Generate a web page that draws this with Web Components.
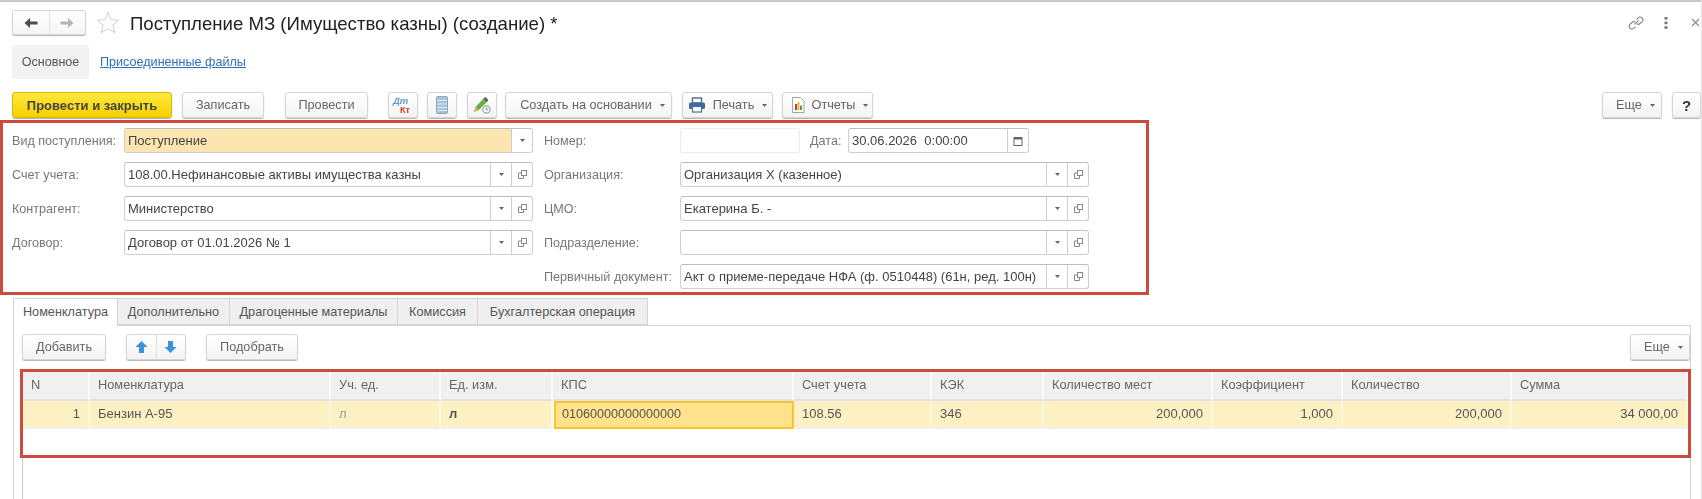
<!DOCTYPE html>
<html lang="ru">
<head>
<meta charset="utf-8">
<title>Поступление МЗ</title>
<style>
    html, body{
        margin: 0;
        height: 100%;
        overflow: hidden;
        background: #fff;
        font: 13px "Liberation Sans", Arial, sans-serif;
        color: #444;
    }
</style>
</head>
<body>
<one-page>
    <one-strip></one-strip>

    <one-header title-text="Поступление МЗ (Имущество казны) (создание) *"></one-header>

    <one-sections>
        <span slot="active">Основное</span>
        <span>Присоединенные файлы</span>
    </one-sections>

    <one-toolbar>
        <one-button primary style="width:160px">Провести и закрыть</one-button>
        <one-button style="width:82px;margin-left:10px">Записать</one-button>
        <one-button style="width:83px;margin-left:21px">Провести</one-button>
        <one-button style="width:30px;margin-left:20px"><one-icon name="dtkt"></one-icon></one-button>
        <one-button style="width:30px;margin-left:9px"><one-icon name="list"></one-icon></one-button>
        <one-button style="width:30px;margin-left:10px"><one-icon name="pencil"></one-icon></one-button>
        <one-button menu style="width:167px;margin-left:8px;padding-left:8px">Создать на основании</one-button>
        <one-button menu style="width:91px;margin-left:10px"><one-icon name="print" slot="icon"></one-icon>Печать</one-button>
        <one-button menu style="width:91px;margin-left:9px;padding-left:4px"><one-icon name="report" slot="icon"></one-icon>Отчеты</one-button>
        <one-button menu style="width:60px;margin-left:auto;padding-left:7px">Еще</one-button>
        <one-button style="width:29px;margin-left:10px;font-weight:700;color:#333;font-size:15px">?</one-button>
    </one-toolbar>

    <one-form>
        <one-column style="--label-width:112px;width:521px">
            <one-row label="Вид поступления:"><one-field value="Поступление" drop highlight></one-field></one-row>
            <one-row label="Счет учета:"><one-field value="108.00.Нефинансовые активы имущества казны" drop open></one-field></one-row>
            <one-row label="Контрагент:"><one-field value="Министерство" drop open></one-field></one-row>
            <one-row label="Договор:"><one-field value="Договор от 01.01.2026 № 1" drop open></one-field></one-row>
        </one-column>
        <one-column style="--label-width:136px;width:545px;margin-left:11px">
            <one-row label="Номер:">
                <one-field light style="flex:0 0 120px"></one-field>
                <one-label style="margin-left:10px;width:38px">Дата:</one-label>
                <one-field value="30.06.2026  0:00:00" calendar style="flex:0 0 181px"></one-field>
            </one-row>
            <one-row label="Организация:"><one-field value="Организация Х (казенное)" drop open></one-field></one-row>
            <one-row label="ЦМО:"><one-field value="Екатерина Б. -" drop open></one-field></one-row>
            <one-row label="Подразделение:"><one-field drop open></one-field></one-row>
            <one-row label="Первичный документ:"><one-field value="Акт о приеме-передаче НФА (ф. 0510448) (61н, ред. 100н)" drop open></one-field></one-row>
        </one-column>
    </one-form>

    <one-tabs>
        <one-tab active style="width:105px">Номенклатура</one-tab>
        <one-tab style="width:112px">Дополнительно</one-tab>
        <one-tab style="width:168px">Драгоценные материалы</one-tab>
        <one-tab style="width:80px">Комиссия</one-tab>
        <one-tab style="width:170px">Бухгалтерская операция</one-tab>
    </one-tabs>

    <one-panel>
        <one-toolbar style="margin:0">
            <one-button style="width:84px">Добавить</one-button>
            <one-updown style="margin-left:20px"></one-updown>
            <one-button style="width:92px;margin-left:20px">Подобрать</one-button>
            <one-button menu style="width:60px;margin-left:auto;padding-left:7px">Еще</one-button>
        </one-toolbar>
        <one-grid>
            <one-cell head>N</one-cell>
            <one-cell head>Номенклатура</one-cell>
            <one-cell head>Уч. ед.</one-cell>
            <one-cell head>Ед. изм.</one-cell>
            <one-cell head>КПС</one-cell>
            <one-cell head>Счет учета</one-cell>
            <one-cell head>КЭК</one-cell>
            <one-cell head>Количество мест</one-cell>
            <one-cell head>Коэффициент</one-cell>
            <one-cell head>Количество</one-cell>
            <one-cell head>Сумма</one-cell>

            <one-cell right>1</one-cell>
            <one-cell>Бензин А-95</one-cell>
            <one-cell dim>л</one-cell>
            <one-cell strong>л</one-cell>
            <one-cell current>01060000000000000</one-cell>
            <one-cell>108.56</one-cell>
            <one-cell>346</one-cell>
            <one-cell right>200,000</one-cell>
            <one-cell right>1,000</one-cell>
            <one-cell right>200,000</one-cell>
            <one-cell right>34 000,00</one-cell>
        </one-grid>
    </one-panel>

    <one-mark style="left:0;top:120px;width:1149px;height:175px"></one-mark>
    <one-mark style="left:20px;top:369px;width:1671px;height:89px"></one-mark>
</one-page>

<script>
"use strict"

const ICONS = {
    back: `<svg width="16" height="12" viewBox="0 0 16 12"><path d="M7 1 1.5 6 7 11V7.6h7.5V4.4H7z" fill="#4d4d4d"/></svg>`,
    forward: `<svg width="16" height="12" viewBox="0 0 16 12"><path d="M9 1l5.5 5L9 11V7.6H1.5V4.4H9z" fill="#b5b5b5"/></svg>`,
    star: `<svg width="24" height="23" viewBox="0 0 24 23"><path d="M12 1.5l3.1 7 7.4.7-5.6 5 1.7 7.4L12 17.8l-6.6 3.8 1.7-7.4-5.6-5 7.4-.7z" fill="#fff" stroke="#d6d6d6" stroke-width="1.1"/></svg>`,
    dtkt: `<svg width="22" height="20" viewBox="0 0 22 20"><text x="1" y="9" font-family="Liberation Sans" font-size="9.5" font-weight="700" font-style="italic" fill="#6a9ad0">Дт</text><text x="8" y="18" font-family="Liberation Sans" font-size="9" font-weight="700" fill="#d8352c">Кт</text></svg>`,
    list: `<svg width="12" height="18" viewBox="0 0 12 18"><rect x=".5" y=".5" width="11" height="17" rx="1" fill="#a9c2d8" stroke="#8aa8c0"/><path d="M1 4.5h10M1 8h10M1 11.5h10M1 14.5h10" stroke="#e3edf5"/></svg>`,
    pencil: `<svg width="20" height="20" viewBox="0 0 20 20"><path d="M2 17l1.5-5L11 4l3.4 3.4-7.6 7.6z" fill="#6bb043"/><path d="M11 4l1.6-1.6a1 1 0 0 1 1.4 0l2 2a1 1 0 0 1 0 1.4L14.4 7.4z" fill="#5a6a50"/><path d="M2 17l1.5-5 3.3 3z" fill="#d9b27a"/><circle cx="14.5" cy="14.5" r="3.6" fill="#fff" stroke="#9aa6b0" stroke-width="1.2"/><path d="M14.5 12.6v2.2h1.8" fill="none" stroke="#7a8792"/></svg>`,
    print: `<svg width="18" height="16" viewBox="0 0 18 16"><rect x="4.5" y="1" width="9" height="5" fill="#fff" stroke="#4a7199" stroke-width="1.4"/><rect x="1" y="5.5" width="16" height="6.5" rx="1.5" fill="#3f6c9a"/><rect x="4.5" y="9.5" width="9" height="5.5" fill="#fff" stroke="#4a7199" stroke-width="1.2"/></svg>`,
    report: `<svg width="14" height="16" viewBox="0 0 14 16"><path d="M1.5.5h8l3.5 3.5v11.5H1.5z" fill="#fff" stroke="#a5a5a5"/><rect x="4" y="7" width="2" height="6" fill="#d23a2e"/><rect x="6.5" y="5" width="2" height="8" fill="#e8b93a"/><rect x="9" y="8.5" width="2" height="4.5" fill="#4ea04a"/></svg>`,
    link: `<svg width="16" height="16" viewBox="0 0 16 16"><g fill="none" stroke="#8a8a8a" stroke-width="1.2"><path d="M6.6 9.4l4-4"/><path d="M8.6 4.4l1.5-1.6a2.7 2.7 0 0 1 3.9 3.8l-1.9 1.9a2.7 2.7 0 0 1-3.4.3"/><path d="M7.4 11.6l-1.5 1.6a2.7 2.7 0 0 1-3.9-3.8l1.9-1.9a2.7 2.7 0 0 1 3.4-.3"/></g></svg>`,
    dots: `<svg width="4" height="12" viewBox="0 0 4 12"><g fill="#777"><rect x=".5" width="3" height="2.6"/><rect x=".5" y="4.6" width="3" height="2.6"/><rect x=".5" y="9.2" width="3" height="2.6"/></g></svg>`,
    close: `<svg width="9" height="9" viewBox="0 0 9 9"><path d="M1 1l7 7M8 1L1 8" stroke="#888" stroke-width="1.1"/></svg>`,
    arrow: `<svg width="5" height="3" viewBox="0 0 5 3"><path d="M0 0h5L2.5 3z" fill="#666"/></svg>`,
    open: `<svg width="9" height="9" viewBox="0 0 9 9"><g fill="#fff" stroke="#888"><rect x="3.5" y=".5" width="5" height="5"/><path d="M3.5 3h-3v5.500h5v-3" fill="none"/></g></svg>`,
    calendar: `<svg width="10" height="10" viewBox="0 0 10 10"><rect x="1" y="1.500" width="8" height="8" fill="#fff" stroke="#666"/><rect x="1" y="1" width="8" height="2.500" fill="#666"/></svg>`,
    up: `<svg width="13" height="14" viewBox="0 0 13 14"><path d="M6.500 1L12.500 7H9v6H4V7H.5z" fill="#3a92dc"/></svg>`,
    down: `<svg width="13" height="14" viewBox="0 0 13 14"><path d="M6.500 13L12.500 7H9V1H4v6H.5z" fill="#3a92dc"/></svg>`
};

class Base extends HTMLElement{
    constructor(){
        super();

        this.attachShadow({mode: "open"});
    }

    connectedCallback(){
        this.shadowRoot.innerHTML = `${this.render()} <style>${this.styles()}</style>`;
    }

    render(){
        return `<slot></slot>`;
    }

    styles(){
        return `:host{display:block}`;
    }
}

class Page extends Base{
    styles(){
        return `
        :host{
            display: flex;
            flex-direction: column;
            box-sizing: border-box;
            height: 499px;
            position: relative;
            overflow: hidden;
            border-right: 1px solid #e6e6e6;
            filter: blur(.35px);
        }`;
    }
}

class Strip extends Base{
    styles(){
        return `
        :host{
            height: 2px;
            background: #c9c9c9;
        }`;
    }
}

class Header extends Base{
    render(){
        return `
        <div class="nav"><span>${ICONS.back}</span><i></i><span>${ICONS.forward}</span></div>
        <div class="star">${ICONS.star}</div>
        <h1>${this.getAttribute('title-text')}</h1>
        <div class="tools">${ICONS.link}<span class="dots">${ICONS.dots}</span>${ICONS.close}</div>
        `;
    }

    styles(){
        return `
        :host{
            display: flex;
            align-items: center;
            height: 25px;
            margin: 8px 0 0 12px;
        }
        .nav{
            display: flex;
            align-items: center;
            width: 74px;
            height: 25px;
            box-sizing: border-box;
            border: 1px solid #d6d6d6;
            border-radius: 3px;
            background: linear-gradient(#fff, #f5f5f5);
            box-shadow: 0 1px 1px rgba(0, 0, 0, .3);
        }
        .nav span{ flex: 1; display: flex; justify-content: center; }
        .nav i{ width: 1px; height: 100%; background: #e2e2e2; }
        .star{ margin-left: 10px; height: 23px; }
        h1{
            margin: 2px 0 0 10px;
            font-weight: 400;
            font-size: 18.6px;
            color: #222;
            white-space: nowrap;
        }
        .tools{
            margin-left: auto;
            display: flex;
            align-items: center;
            gap: 20px;
            padding-right: 1px;
        }
        .dots{ display: flex; margin-right: 3px; }`;
    }
}

class Sections extends Base{
    render(){
        return `<div class="active"><slot name="active"></slot></div><div class="link"><slot></slot></div>`;
    }

    styles(){
        return `
        :host{
            display: flex;
            align-items: center;
            height: 34px;
            margin: 10px 0 0 12px;
            font-size: 12.6px;
        }
        .active{
            width: 77px;
            height: 34px;
            line-height: 34px;
            text-align: center;
            background: #f2f2f2;
            border-radius: 3px;
            color: #555;
        }
        .link{
            margin-left: 11px;
            color: #2f6fb8;
            text-decoration: underline;
        }`;
    }
}

class Toolbar extends Base{
    styles(){
        return `
        :host{
            display: flex;
            height: 26px;
            margin: 13px 0 0 12px;
        }`;
    }
}

class Button extends Base{
    render(){
        const arrow = this.hasAttribute('menu') ? `<span class="arrow">${ICONS.arrow}</span>` : '';
        return `<slot name="icon"></slot><span class="text"><slot></slot></span>${arrow}`;
    }

    styles(){
        return `
        :host{
            display: flex;
            align-items: center;
            justify-content: center;
            box-sizing: border-box;
            height: 26px;
            flex: none;
            border: 1px solid #d6d6d6;
            border-radius: 3px;
            background: linear-gradient(#fff, #f3f3f3);
            box-shadow: 0 1px 1px rgba(0, 0, 0, .3);
            color: #666;
            font-size: 12.7px;
            white-space: nowrap;
        }
        :host([primary]){
            background: linear-gradient(#fce93f, #f6d000);
            border-color: #d9b900;
            color: #444;
            font-weight: 700;
            font-size: 13px;
        }
        .text{ display: flex; align-items: center; }
        ::slotted([slot=icon]){ margin-right: 7px; }
        .arrow{ display: flex; margin-left: 8px; }`;
    }
}

class Icon extends Base{
    render(){
        return ICONS[this.getAttribute('name')];
    }

    styles(){
        return `
        :host{ display: flex; align-items: center; justify-content: center; }`;
    }
}

class UpDown extends Base{
    render(){
        return `<span>${ICONS.up}</span><i></i><span>${ICONS.down}</span>`;
    }

    styles(){
        return `
        :host{
            display: flex;
            align-items: center;
            box-sizing: border-box;
            width: 60px;
            height: 26px;
            border: 1px solid #d6d6d6;
            border-radius: 3px;
            background: linear-gradient(#fff, #f3f3f3);
            box-shadow: 0 1px 1px rgba(0, 0, 0, .3);
        }
        span{ flex: 1; display: flex; justify-content: center; }
        i{ width: 1px; height: 100%; background: #e0e0e0; }`;
    }
}

class Form extends Base{
    styles(){
        return `
        :host{
            display: flex;
            height: 161px;
            margin: 10px 0 0 12px;
        }`;
    }
}

class Column extends Base{
    styles(){
        return `
        :host{
            display: flex;
            flex-direction: column;
            gap: 9px;
            flex: none;
        }`;
    }
}

class Row extends Base{
    render(){
        return `<span>${this.getAttribute('label')}</span><slot></slot>`;
    }

    styles(){
        return `
        :host{
            display: flex;
            align-items: center;
            height: 25px;
        }
        span{
            flex: none;
            width: var(--label-width);
            color: #777;
            font-size: 12.6px;
            white-space: nowrap;
        }`;
    }
}

class Label extends Base{
    styles(){
        return `
        :host{
            display: block;
            flex: none;
            color: #777;
            font-size: 12.6px;
            white-space: nowrap;
        }`;
    }
}

class Field extends Base{
    render(){
        const value = this.getAttribute('value') || '';
        let cells = '';
        if(this.hasAttribute('drop')) cells += `<b>${ICONS.arrow}</b>`;
        if(this.hasAttribute('open')) cells += `<b>${ICONS.open}</b>`;
        if(this.hasAttribute('calendar')) cells += `<b>${ICONS.calendar}</b>`;
        return `<div class="value">${value}</div>${cells}`;
    }

    styles(){
        return `
        :host{
            display: flex;
            flex: 1;
            box-sizing: border-box;
            height: 25px;
            min-width: 0;
            border: 1px solid #cfcfcf;
            border-top-color: #bdbdbd;
            border-radius: 3px;
            background: #fff;
            overflow: hidden;
        }
        :host([light]){ border-color: #ebebeb; }
        .value{
            flex: 1;
            min-width: 0;
            padding: 0 3px;
            line-height: 23px;
            color: #444;
            white-space: pre;
            overflow: hidden;
        }
        :host([highlight]) .value{ background: #fde5b0; }
        b{
            flex: none;
            width: 20px;
            display: flex;
            align-items: center;
            justify-content: center;
            border-left: 1px solid #cfcfcf;
        }`;
    }
}

class Tabs extends Base{
    styles(){
        return `
        :host{
            display: flex;
            height: 28px;
            margin: 9px 0 0 13px;
            position: relative;
            z-index: 1;
        }`;
    }
}

class Tab extends Base{
    styles(){
        return `
        :host{
            display: block;
            box-sizing: border-box;
            height: 27px;
            line-height: 26px;
            text-align: center;
            border: 1px solid #d4d4d4;
            border-left-width: 0;
            background: #efefef;
            color: #555;
            font-size: 12.7px;
            white-space: nowrap;
        }
        :host([active]){
            height: 28px;
            background: #fff;
            border-left-width: 1px;
            border-bottom: 0;
        }`;
    }
}

class Panel extends Base{
    styles(){
        return `
        :host{
            display: flex;
            flex-direction: column;
            flex: 1;
            box-sizing: border-box;
            width: 1678px;
            margin: -1px 0 0 13px;
            padding: 8px 0 0 8px;
            border: 1px solid #d4d4d4;
            border-bottom: 0;
        }`;
    }
}

class Grid extends Base{
    styles(){
        return `
        :host{
            display: grid;
            grid-template-columns: 67px 241px 110px 112px 241px 138px 112px 169px 130px 169px 176px;
            grid-auto-rows: min-content;
            flex: 1;
            margin-top: 10px;
            padding-top: 2px;
            border-left: 1px solid #c8c8c8;
        }`;
    }
}

class Cell extends Base{
    styles(){
        return `
        :host{
            display: block;
            box-sizing: border-box;
            height: 28px;
            padding: 0 8px;
            line-height: 26px;
            background: #fdf1c4;
            border-right: 2px solid #fdf7e2;
            border-bottom: 2px solid #efefef;
            color: #555;
            white-space: nowrap;
        }
        :host([head]){
            height: 29px;
            line-height: 26px;
            background: #f0f0f0;
            border-right-color: #fafafa;
            border-bottom-color: #e2e2e2;
            color: #666;
            font-size: 12.8px;
        }
        :host([right]){ text-align: right; }
        :host([dim]){ color: #999; }
        :host([strong]){ font-weight: 700; }
        :host([current]){
            margin-left: 1px;
            background: #fee28c;
            border: 2px solid #f8c532;
            font-size: 12.6px;
            line-height: 23px;
            padding: 0 6px;
        }`;
    }
}

class Mark extends Base{
    render(){
        return '';
    }

    styles(){
        return `
        :host{
            position: absolute;
            box-sizing: border-box;
            border: 3px solid #cd4a3f;
            pointer-events: none;
        }`;
    }
}

customElements.define('one-page', Page);
customElements.define('one-strip', Strip);
customElements.define('one-header', Header);
customElements.define('one-sections', Sections);
customElements.define('one-toolbar', Toolbar);
customElements.define('one-button', Button);
customElements.define('one-icon', Icon);
customElements.define('one-updown', UpDown);
customElements.define('one-form', Form);
customElements.define('one-column', Column);
customElements.define('one-row', Row);
customElements.define('one-label', Label);
customElements.define('one-field', Field);
customElements.define('one-tabs', Tabs);
customElements.define('one-tab', Tab);
customElements.define('one-panel', Panel);
customElements.define('one-grid', Grid);
customElements.define('one-cell', Cell);
customElements.define('one-mark', Mark);
</script>
</body>
</html>
